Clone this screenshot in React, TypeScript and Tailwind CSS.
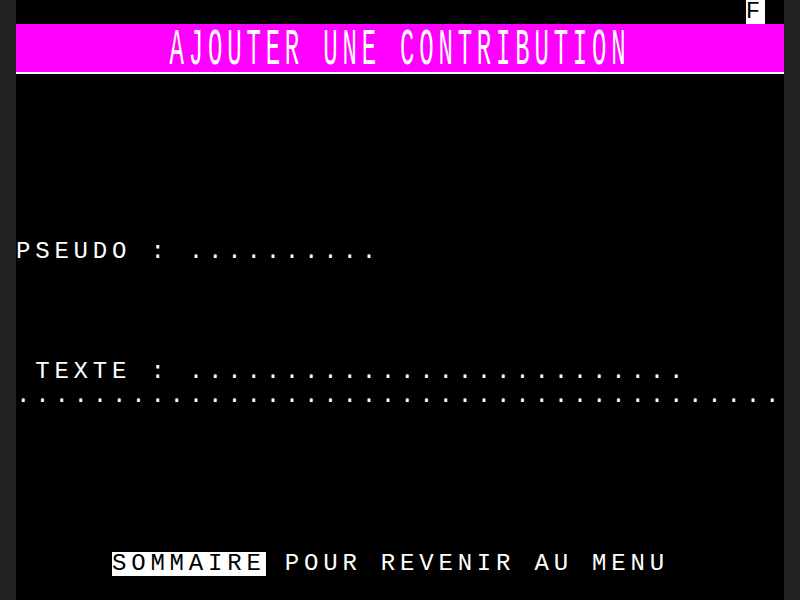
const mono = { fontFamily: '"Liberation Mono", "DejaVu Sans Mono", monospace' };

function Row({ children, className = "" }: { children?: React.ReactNode; className?: string }) {
  return (
    <div className={`h-6 whitespace-pre text-[24px] leading-[24px] tracking-[4.8px] text-white ${className}`}>
      {children}
    </div>
  );
}

export default function App() {
  return (
    <div className="flex h-[600px] w-[800px] justify-center bg-[#212121]" style={mono}>
      <div className="flex w-[768px] flex-col bg-black">
        <Row>
          {" ".repeat(38)}
          <span className="inline-block h-6 bg-white align-top text-black">F</span>
        </Row>

        <div className="h-12 whitespace-pre bg-[#ff00ff] pt-[1px] text-[24px] leading-[24px] tracking-[4.8px] text-white">
          <span className="inline-block origin-top scale-y-[2.15]">
            {"        AJOUTER UNE CONTRIBUTION"}
          </span>
        </div>

        <div className="h-6 border-t-2 border-white" />
        <div className="h-[144px]" />

        <Row>{"PSEUDO : .........."}</Row>

        <div className="h-[96px]" />

        <Row>{" TEXTE : .........................."}</Row>
        <Row>{".".repeat(40)}</Row>

        <div className="h-[144px]" />

        <Row>
          {"     "}
          <span className="inline-block h-6 bg-white align-top text-black">SOMMAIRE</span>
          {" POUR REVENIR AU MENU"}
        </Row>
        <div className="h-6" />
      </div>
    </div>
  );
}
